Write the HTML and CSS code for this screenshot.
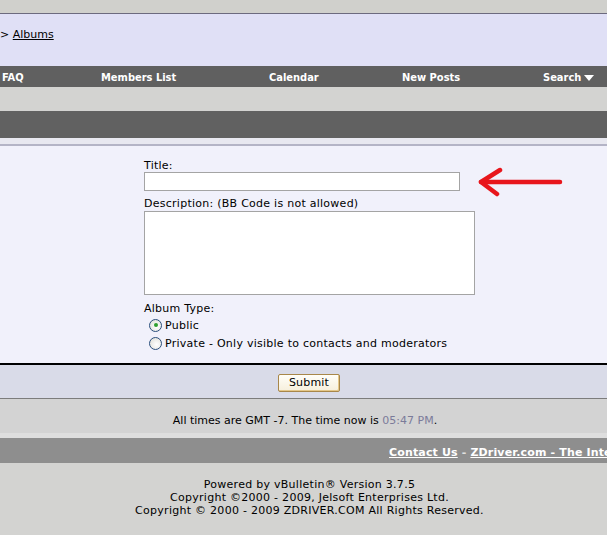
FILE: index.html
```html
<!DOCTYPE html>
<html>
<head>
<meta charset="utf-8">
<link rel="stylesheet" href="styles.css">
</head>
<body>
<div class="page">
  <div class="topgap"></div>
  <div class="crumbbar">
    <span class="crumb">&gt; <a href="#" class="crumb-link">Albums</a></span>
  </div>
  <div class="nav">
    <span class="nav-item">FAQ</span>
    <span class="nav-item">Members List</span>
    <span class="nav-item">Calendar</span>
    <span class="nav-item">New Posts</span>
    <span class="nav-item">Search <svg class="nav-arrow" width="10" height="6" viewBox="0 0 10 6"><path d="M0 0H10L5 6Z" fill="#ffffff"/></svg></span>
  </div>
  <div class="gap"></div>
  <div class="tcat"></div>
  <div class="tcat-under"></div>
  <div class="formpanel">
    <div class="field">
      <div class="label">Title:</div>
      <div class="input"></div>
    </div>
    <div class="field">
      <div class="label">Description: (BB Code is not allowed)</div>
      <div class="textarea"></div>
    </div>
    <div class="field type">
      <div class="label">Album Type:</div>
      <div class="radio-row"><span class="radio checked"></span><span>Public</span></div>
      <div class="radio-row"><span class="radio"></span><span>Private - Only visible to contacts and moderators</span></div>
    </div>
    <svg class="arrow" width="90" height="34" viewBox="0 0 90 34">
      <path d="M4 15 L83 15" stroke="#e8161c" stroke-width="4.5" stroke-linecap="round" fill="none"/>
      <path d="M23 3 L4 15 L20 27" stroke="#e8161c" stroke-width="4.5" stroke-linecap="round" stroke-linejoin="round" fill="none"/>
    </svg>
  </div>
  <div class="submitrow">
    <span class="button">Submit</span>
  </div>
  <div class="timerow">All times are GMT -7. The time now is <span class="time">05:47 PM</span>.</div>
  <div class="timerow-under"></div>
  <div class="footbar">
    <a href="#" class="foot-link">Contact Us</a> - <a href="#" class="foot-link">ZDriver.com - The Internet Driver Resource</a>
  </div>
  <div class="copyright">
    <div>Powered by vBulletin® Version 3.7.5</div>
    <div>Copyright ©2000 - 2009, Jelsoft Enterprises Ltd.</div>
    <div>Copyright © 2000 - 2009 ZDRIVER.COM All Rights Reserved.</div>
  </div>
</div>
</body>
</html>
```
FILE: styles.css
```css
html, body {
  margin: 0;
  padding: 0;
  background: #d3d3d1;
  overflow: hidden;
}
.page {
  width: 607px;
  height: 535px;
  overflow: hidden;
  font-family: "DejaVu Sans", Verdana, sans-serif;
  font-size: 11px;
  color: #000;
  position: relative;
}
.topgap {
  height: 13px;
  background: #d0d0cc;
}
.crumbbar {
  height: 53px;
  border-top: 1px solid #6c6a7e;
  background: #e0e0f6;
  box-sizing: border-box;
  padding-top: 14px;
}
.crumb {
  line-height: 13px;
}
.crumb-link {
  color: #000;
  text-decoration: underline;
}
.nav {
  height: 21px;
  background: #606060;
  display: grid;
  grid-template-columns: 99px 168px 133px 141px auto;
  padding-left: 2px;
  padding-top: 1px;
  box-sizing: border-box;
  align-items: center;
  font-family: "DejaVu Sans Condensed", "DejaVu Sans", sans-serif;
  font-weight: bold;
  font-size: 11px;
  color: #fff;
}
.nav-item {
  display: flex;
  align-items: center;
  gap: 3px;
}
.nav-arrow {
  margin-top: 1px;
}
.gap {
  height: 24px;
}
.tcat {
  height: 27px;
  background: #616161;
}
.tcat-under {
  height: 6px;
  background: #e8e8f0;
  border-bottom: 2px solid #b4b4c6;
}
.formpanel {
  position: relative;
  height: 219px;
  box-sizing: border-box;
  background: #f1f1fb;
  border-bottom: 2px solid #000;
  padding: 13px 0 0 144px;
  letter-spacing: 0.26px;
}
.field {
  display: flex;
  flex-direction: column;
  margin-bottom: 6px;
}
.label {
  line-height: 13px;
}
.input {
  width: 316px;
  height: 19px;
  box-sizing: border-box;
  background: #fff;
  border: 1px solid #a4a4a4;
}
.textarea {
  width: 331px;
  height: 84px;
  margin-top: 1px;
  box-sizing: border-box;
  background: #fff;
  border: 1px solid #a4a4a4;
}
.type {
  margin-top: 7px;
}
.type .label {
  margin-bottom: 1px;
}
.radio-row {
  display: flex;
  align-items: center;
  height: 18px;
  padding-left: 5px;
  gap: 3px;
}
.radio {
  width: 13px;
  height: 13px;
  box-sizing: border-box;
  border-radius: 50%;
  border: 1px solid #2a4e7c;
  background: radial-gradient(circle at 60% 60%, #ffffff 0%, #dcdcd4 100%);
  position: relative;
}
.radio.checked::after {
  content: "";
  position: absolute;
  left: 3.5px;
  top: 3.5px;
  width: 4px;
  height: 4px;
  border-radius: 50%;
  background: #2ea02e;
}
.arrow {
  position: absolute;
  left: 477px;
  top: 21px;
}
.submitrow {
  height: 34px;
  box-sizing: border-box;
  background: #d9dbe8;
  border-bottom: 1px solid #7c7c7c;
  display: flex;
  justify-content: center;
  align-items: center;
  padding-left: 11px;
  padding-top: 2px;
}
.button {
  width: 62px;
  height: 18px;
  box-sizing: border-box;
  border: 1px solid #a8874a;
  border-radius: 2px;
  background: linear-gradient(#fffef8, #f6efdc);
  box-shadow: inset -1px -1px 0 #e5c88a;
  display: flex;
  align-items: center;
  justify-content: center;
  font-size: 11px;
  letter-spacing: 0.2px;
}
.timerow {
  height: 34px;
  line-height: 44px;
  text-align: center;
  padding-left: 3px;
  box-sizing: border-box;
  background: #d3d3d3;
}
.time {
  color: #7b7b9a;
}
.timerow-under {
  height: 5px;
  background: #dedede;
}
.footbar {
  height: 25px;
  box-sizing: border-box;
  background: #8e8e8e;
  padding-left: 389px;
  white-space: nowrap;
  overflow: hidden;
  line-height: 29px;
  font-weight: bold;
  color: #e0e0e0;
  letter-spacing: 0.15px;
}
.foot-link {
  color: #fff;
  text-decoration: underline;
}
.copyright {
  text-align: center;
  line-height: 13px;
  padding-top: 15px;
  padding-left: 12px;
  letter-spacing: 0.27px;
}
```
